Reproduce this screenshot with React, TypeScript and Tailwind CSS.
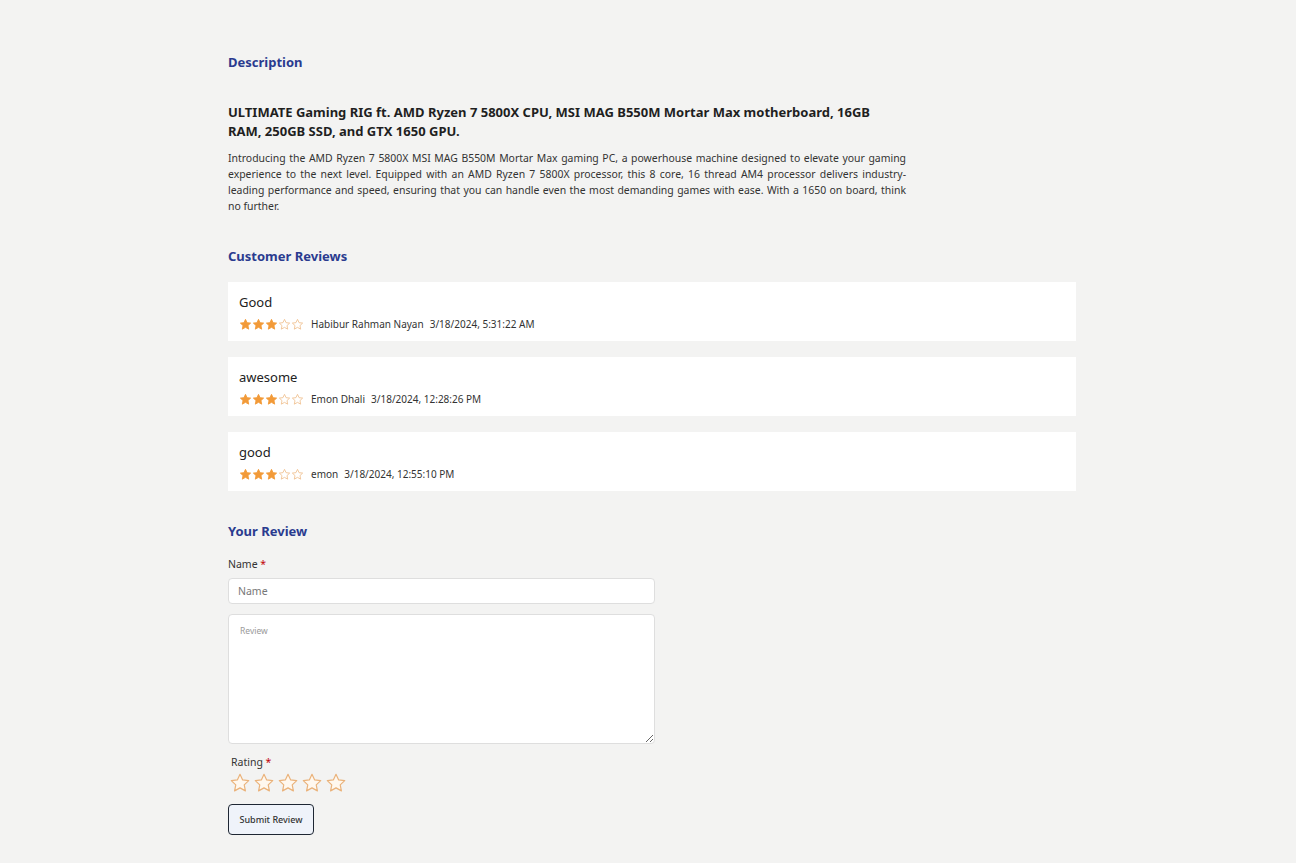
import { useState } from "react";

const reviews = [
  { title: "Good", name: "Habibur Rahman Nayan", date: "3/18/2024, 5:31:22 AM", rating: 3 },
  { title: "awesome", name: "Emon Dhali", date: "3/18/2024, 12:28:26 PM", rating: 3 },
  { title: "good", name: "emon", date: "3/18/2024, 12:55:10 PM", rating: 3 },
];

const STAR = "M12 2.5l2.9 6.1 6.6.8-4.9 4.6 1.3 6.6L12 17.3l-5.9 3.3 1.3-6.6-4.9-4.6 6.6-.8z";

function SmallStars({ rating }: { rating: number }) {
  return (
    <div className="flex items-center gap-[0px]">
      {[1, 2, 3, 4, 5].map((i) => (
        <svg key={i} viewBox="0 0 24 24" className="w-[13px] h-[13px]">
          <path
            d={STAR}
            fill={i <= rating ? "#f29a38" : "none"}
            stroke={i <= rating ? "#f29a38" : "#f0c090"}
            strokeWidth={1.6}
            strokeLinejoin="round"
          />
        </svg>
      ))}
    </div>
  );
}

export default function App() {
  const [form, setForm] = useState({ name: "", review: "", rating: 0 });

  return (
    <div
      className="min-h-screen bg-[#f3f3f2] text-[#222] pl-[228px] pt-[53px] pb-[27px]"
      style={{ fontFamily: '"Noto Sans", "Open Sans", sans-serif' }}
    >
      <div className="w-[848px]">
        {/* Descripcion */}
        <h2 className="text-[13px] font-bold text-[#2a3b8f] leading-[18px]">Description</h2>
        <div className="w-[678px] mt-[32px]">
          <h3 className="text-[13px] font-bold leading-[19px] text-[#1f1f1f]">
            ULTIMATE Gaming RIG ft. AMD Ryzen 7 5800X CPU, MSI MAG B550M Mortar Max motherboard, 16GB RAM, 250GB SSD, and GTX 1650 GPU.
          </h3>
          <p className="mt-[9px] text-[10.44px] leading-[16px] text-justify text-[#333]">
            Introducing the AMD Ryzen 7 5800X MSI MAG B550M Mortar Max gaming PC, a powerhouse machine designed to elevate your gaming experience to the next level. Equipped with an AMD Ryzen 7 5800X processor, this 8 core, 16 thread AM4 processor delivers industry-leading performance and speed, ensuring that you can handle even the most demanding games with ease. With a 1650 on board, think no further.
          </p>
        </div>

        {/* Reviews */}
        <h2 className="mt-[33px] text-[13px] font-bold text-[#2a3b8f] leading-[18px]">Customer Reviews</h2>
        <div className="mt-[17px] flex flex-col gap-[16px]">
          {reviews.map((r) => (
            <div key={r.date} className="bg-white px-[11px] pt-[10px] h-[59px]">
              <p className="text-[13px] leading-[20px] text-[#222]">{r.title}</p>
              <div className="flex items-center gap-[7px] mt-[5px] text-[10px] leading-[14px] text-[#333]">
                <SmallStars rating={r.rating} />
                <span>{r.name}</span>
                <span className="-ml-[1px]">{r.date}</span>
              </div>
            </div>
          ))}
        </div>

        {/* Form */}
        <h2 className="mt-[31px] text-[13px] font-bold text-[#2a3b8f] leading-[18px]">Your Review</h2>
        <form className="w-[427px] mt-[17px]" onSubmit={(e) => e.preventDefault()}>
          <label className="block text-[10.5px] leading-[14px] text-[#333]">
            Name <span className="text-red-700">*</span>
          </label>
          <input
            type="text"
            placeholder="Name"
            value={form.name}
            onChange={(e) => setForm({ ...form, name: e.target.value })}
            className="mt-[7px] w-full h-[26px] bg-white border border-[#dedede] rounded-[4px] px-[9px] text-[10.5px] placeholder:text-[#777] focus:outline-none"
          />
          <textarea
            placeholder="Review"
            value={form.review}
            onChange={(e) => setForm({ ...form, review: e.target.value })}
            className="mt-[10px] block w-full h-[130px] bg-white border border-[#dedede] rounded-[4px] px-[11px] py-[10px] text-[8.5px] placeholder:text-[#999] focus:outline-none"
          />
          <label className="block mt-[11px] ml-[3px] text-[10.5px] leading-[14px] text-[#333]">
            Rating <span className="text-red-700">*</span>
          </label>
          <div className="flex items-center gap-[2px] mt-[3px] ml-[1px]">
            {[1, 2, 3, 4, 5].map((i) => (
              <svg
                key={i}
                viewBox="0 0 24 24"
                className="w-[22px] h-[22px] cursor-pointer"
                onClick={() => setForm({ ...form, rating: i })}
              >
                <path
                  d={STAR}
                  fill={i <= form.rating ? "#f29a38" : "#fff8ef"}
                  stroke="#eab27a"
                  strokeWidth={1.3}
                  strokeLinejoin="round"
                />
              </svg>
            ))}
          </div>
          <button
            type="submit"
            className="mt-[10px] w-[86px] h-[31px] rounded-[4px] border-[1.5px] border-[#1e2633] bg-[#eff3fa] text-[9px] font-medium text-[#333]"
          >
            Submit Review
          </button>
        </form>
      </div>
    </div>
  );
}
